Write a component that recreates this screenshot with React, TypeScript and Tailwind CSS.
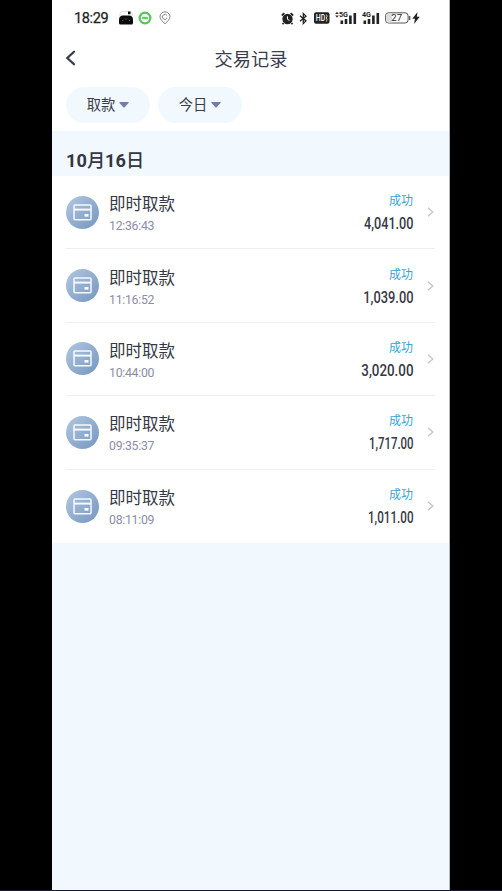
import { ReactNode } from "react";

const records = [
  { time: "12:36:43", amount: "4,041.00", squeeze: "scale-x-[0.745]" },
  { time: "11:16:52", amount: "1,039.00", squeeze: "scale-x-[0.755]" },
  { time: "10:44:00", amount: "3,020.00", squeeze: "scale-x-[0.785]" },
  { time: "09:35:37", amount: "1,717.00", squeeze: "scale-x-[0.67]" },
  { time: "08:11:09", amount: "1,011.00", squeeze: "scale-x-[0.685]" },
];

function Signal({ label }: { label: string }) {
  return (
    <svg width="18" height="14" viewBox="0 0 18 14" fill="#222">
      <text x="0" y="6.3" fontSize="8" fontWeight="700" fontFamily="Roboto, sans-serif" textLength="9" lengthAdjust="spacingAndGlyphs">
        {label}
      </text>
      <rect x="1.5" y="9.5" width="2.6" height="3.5" />
      <rect x="5.7" y="8" width="2.6" height="5" />
      <rect x="10.1" y="4.5" width="2.6" height="8.5" />
      <rect x="14.5" y="2" width="2.6" height="11" />
    </svg>
  );
}

function StatusBar() {
  return (
    <div className="flex h-9 items-center pl-[22px] pr-[29px] text-[#222]">
      <span className="w-[44px] pt-[2px] text-[14.5px] leading-none tracking-[-0.35px] [-webkit-text-stroke:0.25px_#222]">
        18:29
      </span>
      <svg className="ml-px" width="14" height="14" viewBox="0 0 14 14">
        <path d="M1 6V2.5Q1 .7 3 .7h8Q13 .7 13 2.5V6" fill="#fff" stroke="#ccc" strokeWidth=".7" />
        <path d="M9 .5h2.5v2.800H9zM0 9q0-4.500 4-4.500h6q4 0 4 4.500v3q0 1.500-1.500 1.500h-11Q0 13.500 0 12z" fill="#0a0a0a" />
        <path d="M3.500 10l.8-1.200M6 7.500l1 1 1-1M10 8.800l.8 1.200" stroke="#999" strokeWidth=".6" fill="none" />
      </svg>
      <svg className="ml-[5px]" width="14" height="14" viewBox="0 0 14 14">
        <circle cx="7" cy="7" r="5.400" fill="#fff" stroke="#55c657" strokeWidth="2.200" />
        <rect x="3.800" y="5.800" width="6.400" height="2.400" rx="1" fill="#6bcf6c" />
      </svg>
      <svg className="ml-[7px]" width="12" height="14" viewBox="0 0 12 14" fill="none" stroke="#777" strokeWidth=".9">
        <path d="M6 12.800C3 10 1 8 1 5.800a5 5 0 0 1 10 0C11 8 9 10 6 12.800z" />
        <path d="M8 4.500a2.500 2.500 0 1 0 0 2.700" />
      </svg>

      <div className="ml-auto flex items-center">
        <svg width="13" height="13" viewBox="0 0 13 13">
          <circle cx="6.500" cy="7" r="5.200" fill="#222" />
          <path d="M.8 3.500L3.400 1.200M12.200 3.500L9.600 1.200M2.500 11l-1 1.300M10.500 11l1 1.300" stroke="#222" strokeWidth="1.700" />
          <path d="M6.500 4.300V7.300L8.500 8.500" stroke="#fff" fill="none" />
        </svg>
        <svg className="ml-[5px]" width="9" height="13" viewBox="0 0 9 13" fill="none" stroke="#222" strokeWidth="1.300">
          <path d="M1 3.700l6 5.200-2.700 2.600V1.500L7 4.100 1 9.300" />
        </svg>
        <svg className="ml-[6px]" width="16" height="12" viewBox="0 0 16 12">
          <rect width="15.500" height="11.500" y=".3" rx="2" fill="#222" />
          <text x="1.700" y="9.200" fontSize="8.500" fontWeight="500" fontFamily="Roboto, sans-serif" fill="#fff" textLength="9.500" lengthAdjust="spacingAndGlyphs">
            HD
          </text>
          <path d="M12.300 2.500q1.600 1.700 0 3.500q1.600 1.700 0 3.500" stroke="#fff" fill="none" strokeWidth=".8" />
        </svg>
        <svg className="ml-[5px]" width="4" height="14" viewBox="0 0 4 14" fill="#333">
          <path d="M2 .8L3.800 3H.2zM2 6.800L.2 4.600H3.800z" />
        </svg>
        <Signal label="5G" />
        <span className="w-[5px]" />
        <Signal label="4G" />
        <svg className="ml-[5px]" width="26" height="12" viewBox="0 0 26 12">
          <rect x=".6" y=".8" width="22.500" height="10.200" rx="3" fill="#fff" stroke="#555" />
          <path d="M3 1.500h4v9H3Q1.300 10.500 1.300 8V4Q1.300 1.500 3 1.500z" fill="#ddd" />
          <path d="M24.700 4v4" stroke="#555" strokeWidth="1.300" />
          <text x="6.300" y="9.300" fontSize="9.500" fontFamily="Roboto, sans-serif" fill="#222">
            27
          </text>
        </svg>
        <svg className="ml-px" width="8" height="12" viewBox="0 0 8 12">
          <path d="M5.500 0L.3 6.800h2.700L2 12 7.800 4.700H4.900z" fill="#222" />
        </svg>
      </div>
    </div>
  );
}

function FilterChip({ children }: { children: ReactNode }) {
  return (
    <button className="flex h-9 w-[84px] items-center justify-center gap-[4px] rounded-full bg-[#f1f9ff] text-[14.3px] text-[#3a3d49]">
      <span className="pt-[2px]">{children}</span>
      <svg width="10" height="6" viewBox="0 0 10 6">
        <path d="M.8 0h8.400q.8.200.3.900L5.700 5.300q-.7.600-1.400 0L.5.900Q0 .2.800 0z" fill="#777bab" />
      </svg>
    </button>
  );
}

function CardIcon() {
  return (
    <span className="flex size-[33px] items-center justify-center rounded-full bg-linear-to-br from-[#b3c8e2] to-[#7396be]">
      <svg width="19" height="17" viewBox="0 0 19 17" fill="none" stroke="#f6f9fd" strokeWidth="1.500">
        <rect x="1" y="1" width="17" height="14.800" rx="1" />
        <path d="M1 5.600h17" strokeWidth="2" />
        <rect x="11.500" y="10" width="4" height="2.600" fill="#fff" stroke="none" />
      </svg>
    </span>
  );
}

export default function App() {
  return (
    <div className="flex h-[891px] w-[502px] flex-col bg-black font-[Roboto,'Noto_Sans_CJK_SC',sans-serif]">
      <div className="ml-[52px] flex w-[398px] flex-1 flex-col border-r border-[#b5b8bc] bg-[#f1f9ff]">
        <header className="h-[131px] bg-white">
          <StatusBar />
          <div className="flex h-[44px] items-center">
            <svg className="ml-[13px]" width="11" height="16" viewBox="0 0 11 16" fill="none">
              <path d="M9 1.700L2.300 8 9 14.300" stroke="#363848" strokeWidth="2.200" strokeLinecap="round" />
            </svg>
            <h1 className="flex-1 pr-[23px] pt-[3px] text-center text-[18.2px] text-[#3a3d49]">交易记录</h1>
          </div>
          <div className="mt-[7px] flex gap-2 pl-[14px]">
            <FilterChip>取款</FilterChip>
            <FilterChip>今日</FilterChip>
          </div>
        </header>

        <h2 className="flex h-[45px] items-center pl-[14px] pt-[16px] text-[18.2px] font-bold leading-none text-[#343641]">
          10<span className="font-medium">月</span>16<span className="font-medium">日</span>
        </h2>

        <ul className="bg-white px-[14px]">
          {records.map((r) => (
            <li
              key={r.time}
              className="flex h-[73.4px] items-center border-b border-[#efeff2] last:border-b-0"
            >
              <CardIcon />
              <div className="ml-[10px] flex-1 pt-[4px]">
                <p className="text-[16.5px] leading-6 text-[#363945]">即时取款</p>
                <p className="text-[12.3px] leading-[18px] tracking-[-0.28px] text-[#8b8da8]">{r.time}</p>
              </div>
              <div className="pt-[3px] text-right">
                <p className="text-[12px] leading-[18px] text-[#36a5d5]">成功</p>
                <p
                  className={`mt-px origin-right text-[17px] font-medium leading-6 text-[#363843] ${r.squeeze}`}
                >
                  {r.amount}
                </p>
              </div>
              <svg className="ml-[14px] mr-px" width="7" height="10" viewBox="0 0 7 10" fill="none">
                <path d="M1 .7L5.800 5 1 9.300" stroke="#c5c7cf" strokeWidth="1.400" />
              </svg>
            </li>
          ))}
        </ul>
      </div>
      <div className="h-px bg-[#1d1838]" />
    </div>
  );
}
